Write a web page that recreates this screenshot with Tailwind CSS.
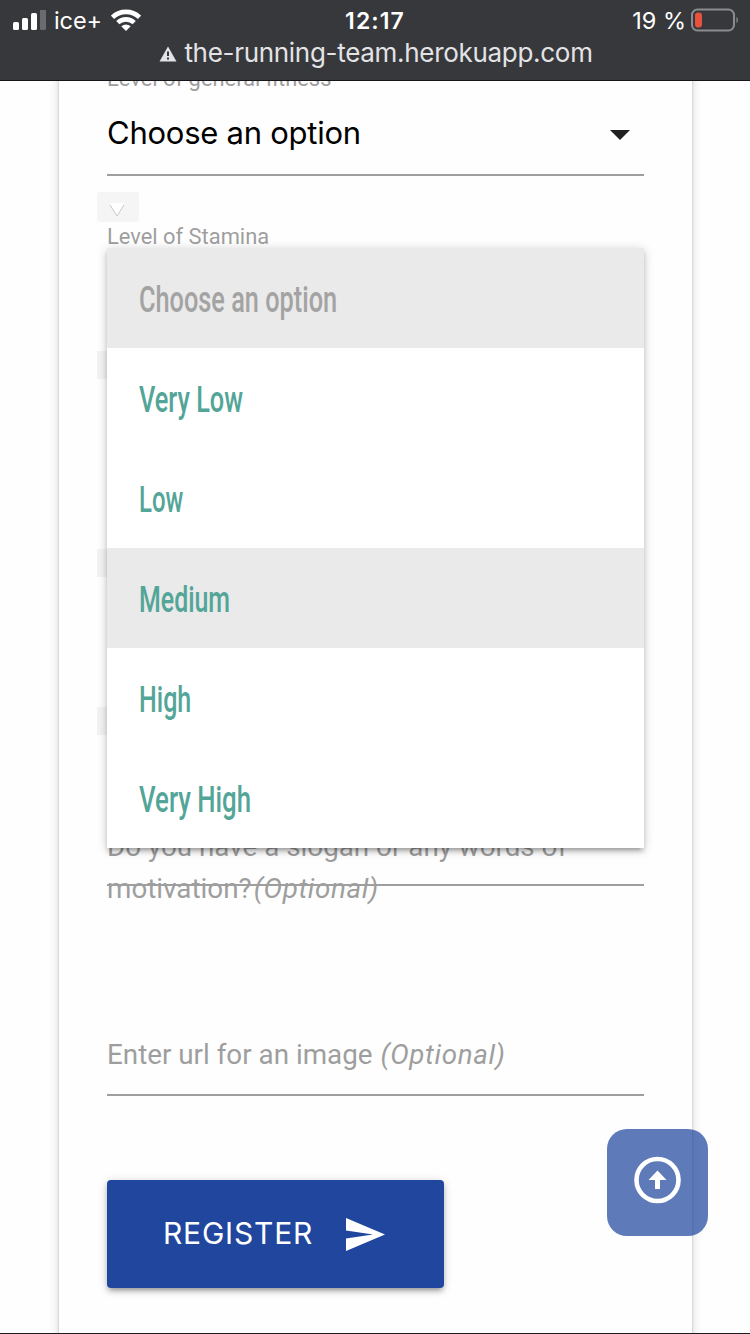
<!DOCTYPE html>
<html lang="en">
<head>
<meta charset="utf-8">
<title>The Running Team</title>
<script src="https://cdn.jsdelivr.net/npm/@tailwindcss/browser@4"></script>
</head>
<body class="bg-white">
<div class="relative flex h-[1334px] w-[750px] flex-col overflow-hidden border-b border-[#1c1b20] bg-[#fefefe] font-['Roboto',sans-serif]">
  <header class="relative z-20 h-[81px] shrink-0 border-b border-[#17141a] bg-[#37383c] font-['Inter',sans-serif] text-white">
    <div class="grid h-10 grid-cols-3 items-center">
      <div class="flex items-center pl-3">
        <svg class="h-5 w-[34px]" viewBox="0 0 34 20" fill="#fff"><rect x="1" y="12" width="6" height="8" rx="1.5"/><rect x="10" y="8" width="6" height="12" rx="1.5"/><rect x="19" y="3" width="6" height="17" rx="1.5"/><rect x="28" y="-1" width="6" height="21" rx="1.5" fill="#6a6b6e"/></svg>
        <span class="ml-2 w-[48px] whitespace-nowrap pt-[2px] text-[23.500px] tracking-[-0.1px]">ice+</span>
        <svg class="ml-[9px] h-[22px] w-[30px]" viewBox="0 0 30 22" fill="none" stroke="#fff" stroke-width="4.600"><path d="M1.500 8.300a19.500 19.500 0 0 1 27 0"/><path d="M6.800 13.600a12 12 0 0 1 16.400 0"/><path d="M15 22l-4.700-4.700q4.700-3.600 9.400 0z" fill="#fff" stroke="none"/></svg>
      </div>
      <div class="pt-[2px] text-center text-[23px] font-semibold tracking-[1.1px]">12:17</div>
      <div class="flex items-center justify-end pr-[11px]">
        <span class="pt-[2px] text-[23.500px] whitespace-nowrap">19 %</span>
        <svg class="ml-[5px] h-6 w-12" viewBox="0 0 48 24"><rect x="1" y="1.5" width="42" height="21" rx="5.5" fill="none" stroke="#8b8c8f" stroke-width="2"/><rect x="4" y="4.500" width="7" height="15" rx="3" fill="#e9513f"/><path d="M45.500 8.500q3 3.500 0 7z" fill="#8b8c8f"/></svg>
      </div>
    </div>
    <div class="-mt-[2px] flex h-7 items-center justify-center gap-[7px] pl-[2px] text-[#e3e3e6]">
      <svg class="mt-[4px] h-4 w-[18px]" viewBox="0 0 18 16"><path d="M9 .5L17.500 15.500H.5z" fill="#e3e3e6"/><path d="M9 5.500v4.500M9 11.500v2" stroke="#37383c" stroke-width="2"/></svg>
      <span class="whitespace-nowrap text-[26px] tracking-[-0.3px]">the-running-team.herokuapp.com</span>
    </div>
  </header>

  <main class="relative -mt-5 ml-[59px] flex h-[1293px] w-[633px] shrink-0 flex-col bg-[#fefefe] px-12 pt-5 text-[#9e9e9e] shadow-[0_0_2px_0_rgba(0,0,0,0.22),0_0_10px_0_rgba(0,0,0,0.16)]">
    <label class="-mt-[14px] h-6 text-[21.900px] leading-6">Level of general fitness</label>
    <div class="flex h-[85px] items-center justify-between border-b-2 border-[#9e9e9e] pt-[2px] font-['Inter',sans-serif] text-black">
      <span class="text-[31px] tracking-[-0.25px]">Choose an option</span>
      <svg class="mt-[2px] mr-[14px] h-[10px] w-5" viewBox="0 0 20 10"><path d="M0 0h20L10 10z" fill="#212121"/></svg>
    </div>
    <div class="mt-4 -ml-[10px] flex h-[30px] w-[42px] items-center rounded-[3px] bg-[#f5f5f5] pl-3">
      <svg class="mt-1 h-4 w-4" viewBox="0 0 16 16"><path d="M1 2h14L8 15z" fill="#fff"/><path d="M1 4l7 11 7-11" fill="none" stroke="#c9c9c9"/></svg>
    </div>
    <label class="mt-[3px] h-6 text-[21.900px] leading-6">Level of Stamina</label>
    <div class="mt-[102px] -ml-[10px] h-7 w-[42px] bg-[#f3f3f3]"></div>
    <div class="mt-[170px] -ml-[10px] h-7 w-[42px] bg-[#f3f3f3]"></div>
    <div class="mt-[130px] -ml-[10px] h-7 w-[42px] bg-[#f3f3f3]"></div>
    <div class="relative mt-[91px] h-[84px] text-[27.800px] leading-[42px]">
      Do you have a slogan or any words of<br>motivation?<i class="ml-[2px] tracking-[0.6px]">(Optional)</i>
      <div class="absolute inset-x-0 top-[58px] h-[2px] bg-[#9e9e9e]"></div>
    </div>
    <label class="mt-[124px] flex h-[62px] items-start border-b-2 border-[#9e9e9e] text-[27.800px] leading-[42px] whitespace-pre">Enter url for an image <i class="ml-px tracking-[0.6px]">(Optional)</i></label>
    <button class="mt-[84px] flex h-[108px] w-[337px] items-center rounded-[4px] bg-[#20479d] pl-14 font-['Inter',sans-serif] text-white shadow-[0_4px_4px_0_rgba(0,0,0,0.14),0_6px_2px_-4px_rgba(0,0,0,0.12),0_2px_10px_0_rgba(0,0,0,0.2)]">
      <span class="w-[183px] pb-[2px] text-left text-[30px] tracking-[0.8px]">REGISTER</span>
      <svg class="h-[33px] w-[39px]" viewBox="0 0 39 33"><path d="M0 0L39 16.500 0 33V20.500L27 16.500 0 12.500z" fill="#fff"/></svg>
    </button>

    <ul class="absolute top-[187px] left-12 w-[537px] bg-white text-[36px] font-medium text-[#53a598] shadow-[0_4px_4px_0_rgba(0,0,0,0.14),0_6px_2px_-4px_rgba(0,0,0,0.12),0_2px_10px_0_rgba(0,0,0,0.2)]">
      <li class="flex h-[100px] items-center bg-[#eaeaea] px-8 pt-1 text-[#a3a3a3]"><span class="origin-left scale-x-[0.703]">Choose an option</span></li>
      <li class="flex h-[100px] items-center px-8 pt-1"><span class="origin-left scale-x-[0.703]">Very Low</span></li>
      <li class="flex h-[100px] items-center px-8 pt-1"><span class="origin-left scale-x-[0.665]">Low</span></li>
      <li class="flex h-[100px] items-center bg-[#eaeaea] px-8 pt-1"><span class="origin-left scale-x-[0.692]">Medium</span></li>
      <li class="flex h-[100px] items-center px-8 pt-1"><span class="origin-left scale-x-[0.695]">High</span></li>
      <li class="flex h-[100px] items-center px-8 pt-1"><span class="origin-left scale-x-[0.716]">Very High</span></li>
    </ul>
  </main>

  <button class="absolute top-[1129px] left-[607px] flex h-[107px] w-[101px] items-start justify-center rounded-[20px] bg-[#20479d]/72 pt-[27px]">
    <svg class="h-12 w-12" viewBox="0 0 48 48"><circle cx="23.500" cy="24" r="21" fill="none" stroke="#fff" stroke-width="4.600"/><path d="M23.500 14.500l9 9.500h-6.500v9h-5v-9h-6.500z" fill="#fff"/></svg>
  </button>
</div>
</body>
</html>
